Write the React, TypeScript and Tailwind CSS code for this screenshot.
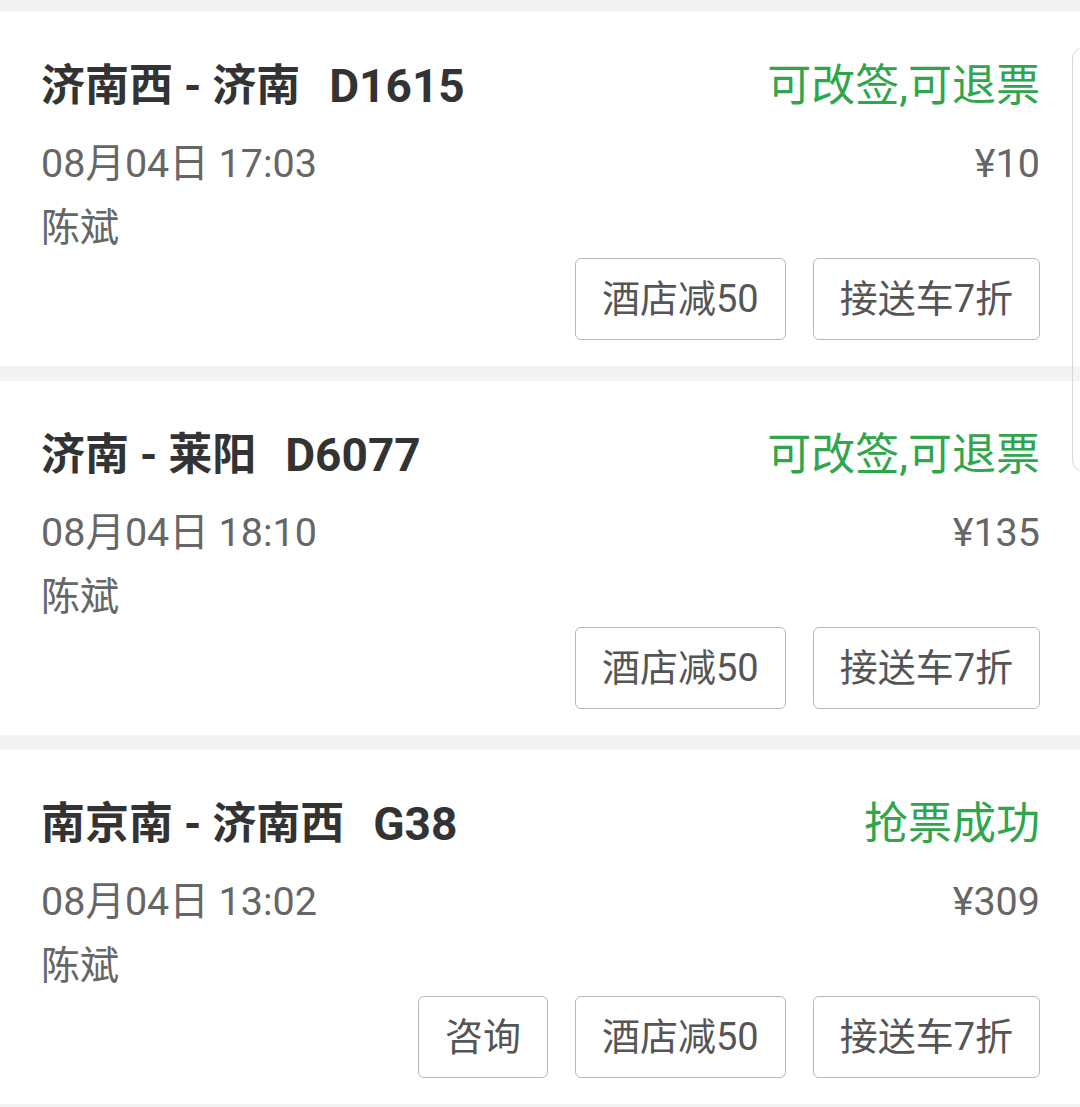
import React from "react";

type Ticket = {
  from: string;
  to: string;
  train: string;
  status: string;
  date: string;
  price: string;
  name: string;
  consult?: boolean;
};

const tickets: Ticket[] = [
  { from: "济南西", to: "济南", train: "D1615", status: "可改签,可退票", date: "08月04日 17:03", price: "¥10", name: "陈斌" },
  { from: "济南", to: "莱阳", train: "D6077", status: "可改签,可退票", date: "08月04日 18:10", price: "¥135", name: "陈斌" },
  { from: "南京南", to: "济南西", train: "G38", status: "抢票成功", date: "08月04日 13:02", price: "¥309", name: "陈斌", consult: true },
];

const font = { fontFamily: 'Roboto, "Noto Sans CJK SC", sans-serif' };

function Btn({ children }: { children: React.ReactNode }) {
  return (
    <div className="h-[82px] px-[26px] flex items-center justify-center border border-[#b8b8b8] rounded-[6px] text-[38px] text-[#555555] leading-none bg-white">
      {children}
    </div>
  );
}

function Card({ t }: { t: Ticket }) {
  return (
    <div className="bg-white pl-[41px] pr-[40px] pt-[44px] pb-[26px]">
      <div className="h-[60px] flex items-center justify-between">
        <div className="flex items-center font-bold text-[#333333] leading-none whitespace-pre">
          <span className="text-[44px]">{t.from} - {t.to}</span>
          <span className="text-[46px] ml-[29px]">{t.train}</span>
        </div>
        <div className="text-[44px] text-[#2fa64c] leading-none">{t.status}</div>
      </div>
      <div className="mt-[24px] h-[48px] flex items-center justify-between text-[39.5px] text-[#666666] leading-none">
        <div>{t.date}</div>
        <div>{t.price}</div>
      </div>
      <div className="mt-[16px] h-[48px] flex items-center text-[39px] text-[#666666] leading-none">
        {t.name}
      </div>
      <div className="mt-[6px] flex justify-end gap-[27px]">
        {t.consult && <Btn>咨询</Btn>}
        <Btn>酒店减50</Btn>
        <Btn>接送车7折</Btn>
      </div>
    </div>
  );
}

export default function App() {
  return (
    <div className="relative w-[1080px] h-[1107px] overflow-hidden bg-[#f3f3f3] pt-[12px]" style={font}>
      <div className="flex flex-col gap-[15px]">
        {tickets.map((t, i) => (
          <Card key={i} t={t} />
        ))}
      </div>
      <div className="absolute left-[1072px] top-[47px] w-[24px] h-[425px] border border-[#d6d6d6] rounded-[12px] bg-white/10" />
    </div>
  );
}
